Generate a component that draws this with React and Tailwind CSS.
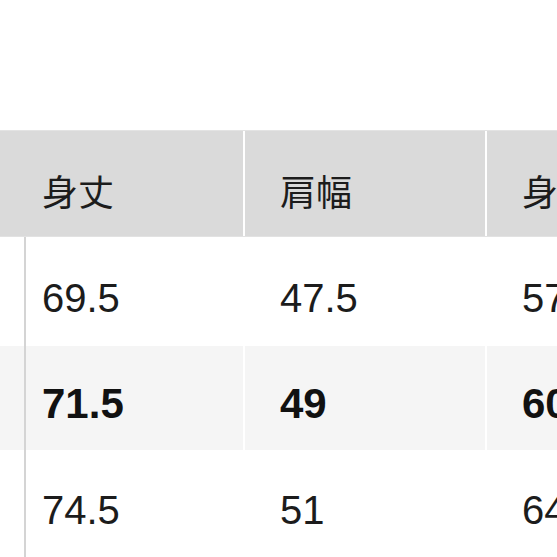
import React from 'react';

const rows = [
  { values: ['69.5', '47.5', '57'], bold: false, bg: 'bg-white', h: 'h-[109px]', pt: 'pt-[12px]', divider: 'bg-white' },
  { values: ['71.5', '49', '60'], bold: true, bg: 'bg-[#f5f5f5]', h: 'h-[104px]', pt: 'pt-[11px]', divider: 'bg-white' },
  { values: ['74.5', '51', '64'], bold: false, bg: 'bg-white', h: 'h-[107px]', pt: 'pt-[13px]', divider: 'bg-white' }
];

export default function App() {
  return (
    <div className="w-[557px] h-[557px] overflow-hidden bg-white text-[#1c1c1c]">
      <div className="h-[130px]" />

      <div className="flex h-[107px] bg-[#dadada] border-t border-[#e3e3e3] border-b border-b-[#e2e2e2] whitespace-nowrap font-['Noto_Sans_CJK_JP','Noto_Sans',sans-serif] text-[36px] leading-none">
        <div className="flex w-[243px] shrink-0 items-center pl-[42px] pt-[12px]">身丈</div>
        <div className="w-[2px] shrink-0 bg-white" />
        <div className="flex w-[240px] shrink-0 items-center pl-[35px] pt-[12px]">肩幅</div>
        <div className="w-[2px] shrink-0 bg-white" />
        <div className="flex w-[240px] shrink-0 items-center pl-[35px] pt-[12px]">身幅</div>
      </div>

      {rows.map((row) => (
        <div
          key={row.values[0]}
          className={`flex ${row.h} ${row.bg} whitespace-nowrap font-['Liberation_Sans',Arial,sans-serif] leading-none ${row.bold ? 'font-bold text-[42px] text-[#111]' : 'text-[40px]'}`}
        >
          <div className="w-[24px] shrink-0" />
          <div className="w-[2px] shrink-0 bg-[#d4d4d4]" />
          <div className={`flex w-[217px] shrink-0 items-center pl-[16px] ${row.pt}`}>{row.values[0]}</div>
          <div className={`w-[2px] shrink-0 ${row.divider}`} />
          <div className={`flex w-[240px] shrink-0 items-center pl-[35px] ${row.pt}`}>{row.values[1]}</div>
          <div className={`w-[2px] shrink-0 ${row.divider}`} />
          <div className={`flex w-[240px] shrink-0 items-center pl-[35px] ${row.pt}`}>{row.values[2]}</div>
        </div>
      ))}
    </div>
  );
}
